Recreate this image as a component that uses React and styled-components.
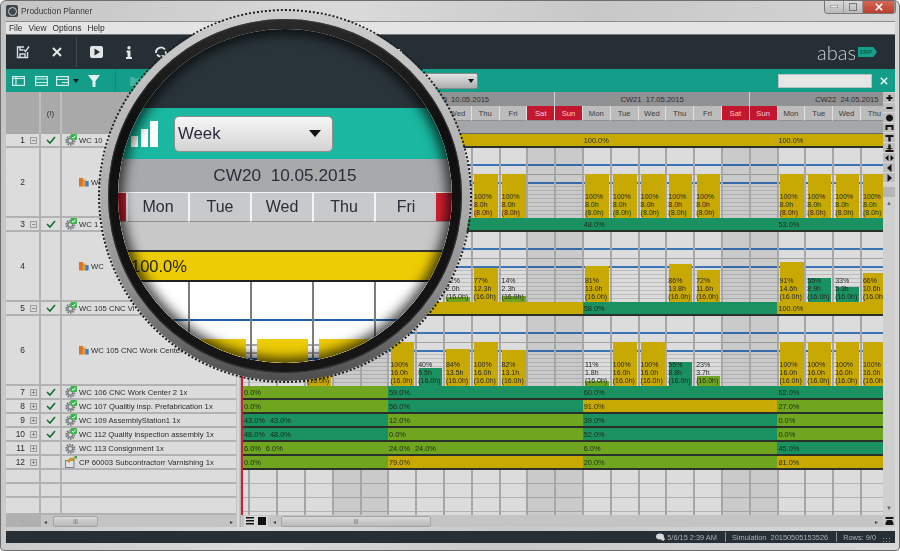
import React from 'react';
import styled, { createGlobalStyle } from 'styled-components';

const GlobalStyle = createGlobalStyle`
  html, body { margin: 0; padding: 0; background: #fff; }
  * { box-sizing: border-box; }
`;

const YELLOW = '#c8a904';
const TEAL = '#199160';
const LIME = '#6fa51f';
const DAYS = ['Tue', 'Wed', 'Thu', 'Fri', 'Sat', 'Sun', 'Mon'];
const DAY_TEMPLATE = '5.4px repeat(24, 27.8px)';

const Window = styled.div`
  width: 900px;
  height: 551px;
  display: flex;
  flex-direction: column;
  padding: 0 4px 7px 5px;
  overflow: hidden;
  position: relative;
  border: 1px solid #6d6d6d;
  border-radius: 6px 6px 4px 4px;
  background: linear-gradient(100deg, #c4c4c4, #dadada 35%, #c8c8c8 60%, #d8d8d8);
  font-family: 'Liberation Sans', Arial, sans-serif;
  color: #333;
  filter: blur(0.35px);
`;
const TitleBar = styled.div`
  height: 20px;
  flex: none;
  display: flex;
  align-items: center;
  gap: 3px;
  font-size: 8.4px;
  color: #3a3a3a;
`;
const TitleLogo = styled.span`
  width: 12px;
  height: 12px;
  background: #3d474c;
  border-radius: 2px;
  display: flex;
  align-items: center;
  justify-content: center;
  &::after {
    content: '';
    width: 7px;
    height: 7px;
    border-radius: 50%;
    border: 1px solid #c8cfd2;
  }
`;
const WindowControls = styled.div`
  position: absolute;
  top: -1px;
  right: 3px;
  width: 72px;
  height: 14px;
  display: flex;
  border: 1px solid #777;
  border-top: 0;
  border-radius: 0 0 4px 4px;
  overflow: hidden;
`;
const ControlButton = styled.span`
  flex: ${p => p.$grow || 1};
  display: flex;
  align-items: center;
  justify-content: center;
  color: #fff;
  background: ${p => p.$close
    ? 'linear-gradient(#d9695a, #b9402f)'
    : 'linear-gradient(#dcdcdc, #b9b9b9)'};
  border-right: 1px solid #999;
`;
const MenuBar = styled.div`
  height: 14px;
  flex: none;
  display: flex;
  align-items: center;
  gap: 6px;
  padding-left: 3px;
  font-size: 8.4px;
  background: #e4e4e4;
  border-top: 1px solid #8d8d8d;
  border-bottom: 1px solid #777;
  color: #2d2d2d;
`;
const DarkBar = styled.div`
  height: 34px;
  flex: none;
  display: flex;
  align-items: center;
  background: #262f35;
  padding-right: 18px;
`;
const ToolButton = styled.span`
  width: ${p => p.$w}px;
  margin-left: ${p => p.$ml || 0}px;
  flex: none;
  display: flex;
  align-items: center;
  justify-content: center;
`;
const DarkDivider = styled.span`
  width: 1px;
  height: 30px;
  margin: 0 2px;
  flex: none;
  background: #3f4a50;
`;
const LogoWrap = styled.div`
  margin-left: auto;
  display: flex;
  align-items: center;
  gap: 2px;
`;
const LogoText = styled.span`
  font-family: Lato, 'Liberation Sans', sans-serif;
  font-weight: 300;
  font-size: 20px;
  line-height: 20px;
  color: #c9cfd1;
`;
const LogoTag = styled.span`
  width: 19px;
  height: 10px;
  padding-left: 2px;
  display: flex;
  align-items: center;
  font-size: 6px;
  font-weight: bold;
  color: #0b5f52;
  background: #14a08a;
  clip-path: polygon(0 0, 80% 0, 100% 50%, 80% 100%, 0 100%);
`;
const TealBar = styled.div`
  height: 23px;
  flex: none;
  display: flex;
  align-items: center;
  background: #149e8a;
`;
const TealDivider = styled.span`
  width: 1px;
  height: 23px;
  margin: 0 9px;
  flex: none;
  background: #0f8a78;
`;
const SelectBox = styled.div`
  width: 200px;
  height: 16px;
  margin-left: 133px;
  padding-right: 3px;
  display: flex;
  align-items: center;
  justify-content: flex-end;
  border: 1px solid #8a8a8a;
  border-radius: 2px;
  background: linear-gradient(#e2e2e2, #adadad);
`;
const SearchBox = styled.div`
  width: 94px;
  height: 14px;
  margin-left: auto;
  background: #e6e6e6;
  border: 1px solid #b6c4c1;
`;
const CloseWrap = styled.span`
  width: 23px;
  display: flex;
  justify-content: center;
  color: #e6f5f2;
`;
const Main = styled.div`
  flex: 1;
  min-height: 0;
  display: flex;
  background: #c9c9c9;
`;
const LeftPane = styled.div`
  width: 230px;
  flex: none;
  display: flex;
  flex-direction: column;
  background: #dcdcdc;
`;
const RowGrid = styled.div`
  display: grid;
  grid-template-columns: 35px 21px 1fr;
  height: ${p => p.$h}px;
  flex: ${p => (p.$fill ? 1 : 'none')};
  background: ${p => p.$bg || '#dcdcdc'};
  border-bottom: ${p => (p.$header ? '0' : '2px solid #b2b2b2')};
`;
const CellBase = styled.div`
  display: flex;
  align-items: center;
  font-size: 7.7px;
  color: #2b2b2b;
  white-space: nowrap;
  overflow: hidden;
  border-right: 2px solid ${p => (p.$header ? '#bdbdbd' : '#b2b2b2')};
`;
const NumberCell = styled(CellBase)`
  justify-content: flex-end;
  gap: 3px;
  padding-right: 2px;
  font-size: 8.4px;
`;
const FlagCell = styled(CellBase)`
  justify-content: center;
`;
const NameCell = styled(CellBase)`
  padding-left: ${p => (p.$child ? 17 : 3)}px;
  gap: 2px;
  border-right: 0;
`;
const Expander = styled.span`
  width: 7px;
  height: 7px;
  margin-left: 2px;
  display: inline-flex;
  align-items: center;
  justify-content: center;
  font-size: 7px;
  line-height: 1;
  color: #456;
  background: #d6d8da;
  border: 1px solid #9c9c9c;
  visibility: ${p => (p.$hidden ? 'hidden' : 'visible')};
`;
const Splitter = styled.div`
  width: 5px;
  flex: none;
  background: linear-gradient(90deg, #b8b8b8, #e4e4e4 40%, #a8a8a8);
`;
const ChartPane = styled.div`
  width: 642px;
  flex: none;
  display: flex;
  flex-direction: column;
  overflow: hidden;
`;
const WeekRow = styled.div`
  height: 14px;
  flex: none;
  display: grid;
  grid-template-columns: 118.6px repeat(3, 194.7px);
  background: #909192;
`;
const WeekCell = styled.div`
  display: flex;
  align-items: center;
  justify-content: center;
  white-space: pre;
  font-size: 7.6px;
  color: #2e2e2e;
  border-left: ${p => (p.$first ? 0 : '1px solid #d2d2d2')};
`;
const DayRow = styled.div`
  height: 15px;
  flex: none;
  display: grid;
  grid-template-columns: 7.4px repeat(24, 27.8px);
  background: #b4b4b4;
`;
const DayCell = styled.div`
  display: flex;
  align-items: center;
  justify-content: center;
  font-size: 7.7px;
  color: ${p => (p.$off ? '#f3ccd1' : '#3a3a3a')};
  background: ${p => (p.$off ? '#c2172e' : '#bcbcbc')};
  border-left: 1px solid #e0e0e0;
  border-bottom: 1px solid #8f8f8f;
`;
const HeaderGap = styled.div`
  height: 13px;
  flex: none;
  background: #a5a6a7;
  border-bottom: 1px solid #666;
`;
const ChartBody = styled.div`
  flex: 1;
  min-height: 0;
  display: flex;
  flex-direction: column;
  border-left: 2px solid #d4202c;
`;
const SegmentRow = styled.div`
  height: 14px;
  flex: none;
  display: grid;
  grid-template-columns: 145px 194.7px 194.7px 1fr;
  border-bottom: 2px solid #2a3128;
`;
const Segment = styled.div`
  display: flex;
  align-items: center;
  gap: 5px;
  padding-left: 1px;
  font-size: 7.4px;
  white-space: nowrap;
  overflow: hidden;
  color: #1d2a16;
  background: ${p => p.$c};
`;
const TallRow = styled.div`
  height: 70px;
  flex: none;
  display: grid;
  grid-template-columns: ${DAY_TEMPLATE};
  background-color: #dcdcdc;
  background-repeat: no-repeat;
  background-image:
    linear-gradient(#3a74b6, #3a74b6),
    linear-gradient(#3a74b6, #3a74b6),
    linear-gradient(#a2a2a2, #a2a2a2),
    repeating-linear-gradient(#bcbcbc 0 1px, transparent 1px 4px);
  background-size: 100% 2px, 100% 2px, 100% 1px, 100% 32px;
  background-position: 0 16px, 0 34px, 0 26px, 0 38px;
`;
const DayColumn = styled.div`
  display: grid;
  min-width: 0;
  border-left: ${p => (p.$lead ? 0 : '2px solid #a6a6a6')};
  background: ${p => (p.$off ? 'rgba(0, 0, 0, 0.08)' : 'transparent')};
`;
const LoadBar = styled.div`
  grid-area: 1 / 1;
  align-self: end;
  width: 23.5px;
  margin-left: 1.5px;
  background: ${p => p.$c};
`;
const LoadText = styled.div`
  grid-area: 1 / 1;
  align-self: end;
  margin-left: 1px;
  font-size: 7px;
  line-height: 8px;
  white-space: pre;
  color: #262626;
  padding-bottom: 1px;
`;
const EmptyGrid = styled.div`
  flex: 1;
  display: grid;
  grid-template-columns: ${DAY_TEMPLATE};
  background-color: #dcdcdc;
  background-image: repeating-linear-gradient(transparent 0 12.5px, #b2b2b2 12.5px 14px);
`;
const SidePane = styled.div`
  width: 12px;
  flex: none;
  display: flex;
  flex-direction: column;
  padding-top: 1px;
  background: #cfcfcf;
`;
const SideButton = styled.span`
  height: 10px;
  flex: none;
  display: flex;
  align-items: center;
  justify-content: center;
  background: #bdbdbd;
  border-bottom: 1px solid #d6d6d6;
`;
const SideThumb = styled.span`
  height: 10px;
  margin-top: 4px;
  flex: none;
  background: #b5b5b5;
`;
const SideTrack = styled.div`
  flex: 1;
  display: flex;
  flex-direction: column;
  justify-content: space-between;
  align-items: center;
  padding: 3px 0 4px;
  font-size: 6px;
  line-height: 6px;
  color: #666;
`;
const ScrollRow = styled.div`
  height: 12px;
  flex: none;
  display: flex;
  background: #c4c4c4;
`;
const GripCorner = styled.div`
  width: 35px;
  flex: none;
  display: flex;
  align-items: center;
  justify-content: center;
  font-size: 6px;
  letter-spacing: 1px;
  color: #8d8d8d;
  background: #b0b0b0;
`;
const LeftTrack = styled.div`
  width: 195px;
  flex: none;
  display: flex;
  align-items: center;
  padding: 0 3px;
  font-size: 6px;
  color: #444;
`;
const ChartTrack = styled.div`
  width: 642px;
  flex: none;
  display: flex;
  align-items: center;
  padding: 0 5px 0 3px;
  font-size: 6px;
  color: #444;
`;
const Thumb = styled.span`
  width: ${p => p.$w}px;
  height: 11px;
  margin-left: ${p => p.$ml}px;
  flex: none;
  display: flex;
  align-items: center;
  justify-content: center;
  font-size: 6px;
  color: #666;
  border: 1px solid #a3a3a3;
  border-radius: 2px;
  background: linear-gradient(#d8d8d8, #bababa);
`;
const PushRight = styled.span`
  margin-left: auto;
`;
const ArrowGap = styled.span`
  margin-left: 5px;
`;
const ViewButton = styled.span`
  width: 12px;
  height: 11px;
  flex: none;
  display: flex;
  align-items: center;
  justify-content: center;
  background: #d6d6d6;
`;
const CornerButton = styled.span`
  width: 12px;
  flex: none;
  display: flex;
  align-items: center;
  justify-content: center;
  background: #c8c8c8;
`;
const StatusBar = styled.div`
  height: 12px;
  margin-top: 4px;
  flex: none;
  display: flex;
  align-items: center;
  justify-content: flex-end;
  padding-right: 5px;
  font-size: 7.4px;
  white-space: pre;
  color: #aab2b5;
  background: #262f35;
`;
const StatusItem = styled.span`
  display: flex;
  align-items: center;
  gap: 2px;
  height: 10px;
  padding: 0 ${p => (p.$last ? 0 : 8)}px 0 6px;
  border-right: ${p => (p.$last ? 0 : '1px solid #87908f')};
`;
const ResizeGrip = styled.span`
  width: 8px;
  height: 6px;
  margin-left: 6px;
  align-self: flex-end;
  background-image: radial-gradient(#8b9395 0.8px, transparent 1px);
  background-size: 3px 3px;
`;

/* the magnifying glass lying over the window */
const Lens = styled.div`
  position: absolute;
  left: 97px;
  top: 8px;
  width: 374px;
  height: 374px;
  border-radius: 50%;
  border: 2px dotted #1c1c1c;
  display: flex;
`;
const MetalRing = styled.div`
  flex: 1;
  border-radius: 50%;
  padding: 8px;
  display: flex;
  background: linear-gradient(#cdcdcd, #a9a9a9 55%, #8c8c8c 75%, #4d4d4d);
`;
const BlackRing = styled.div`
  flex: 1;
  border-radius: 50%;
  padding: 10px;
  display: flex;
  background: linear-gradient(#2a2a2a, #0f0f0f 30%, #161616);
  box-shadow: inset 0 0 1px 1px rgba(60, 60, 60, 0.9);
`;
const Glass = styled.div`
  flex: 1;
  border-radius: 50%;
  overflow: hidden;
  position: relative;
  display: flex;
  flex-direction: column;
  background: #fff;
  &::after {
    content: '';
    position: absolute;
    inset: 0;
    border-radius: 50%;
    box-shadow: inset 0 0 12px 5px rgba(0, 0, 0, 0.72);
  }
`;
const LensDark = styled.div`
  height: 79px;
  flex: none;
  background: #29343a;
`;
const LensTeal = styled.div`
  height: 51px;
  flex: none;
  display: flex;
  align-items: center;
  padding-left: 13px;
  gap: 16px;
  background: #1ab8a0;
`;
const LensSelect = styled.div`
  width: 159px;
  height: 36px;
  padding: 0 11px 0 3px;
  display: flex;
  align-items: center;
  justify-content: space-between;
  font-size: 16.8px;
  color: #2a2a3c;
  border: 1px solid #8f8f8f;
  border-radius: 5px;
  background: linear-gradient(#f6f6f6, #d3d3d3);
`;
const LensCaret = styled.span`
  width: 0;
  height: 0;
  border-left: 6px solid transparent;
  border-right: 6px solid transparent;
  border-top: 7px solid #111;
`;
const LensWeek = styled.div`
  height: 33px;
  flex: none;
  display: flex;
  align-items: center;
  justify-content: center;
  white-space: pre;
  font-size: 17.2px;
  color: #2c2c3a;
  background: #a7a9ab;
`;
const LensDays = styled.div`
  height: 30px;
  flex: none;
  display: grid;
  grid-template-columns: 8px repeat(5, 62px) 1fr;
  background: #a7a9ab;
`;
const LensDay = styled.div`
  display: flex;
  align-items: center;
  justify-content: center;
  font-size: 16px;
  color: #2c2c3a;
  background: ${p => (p.$off ? '#d2202f' : '#c8c9cb')};
  border-left: ${p => (p.$off ? 0 : '2px solid #f4f4f4')};
  border-top: 1px solid #f4f4f4;
  border-bottom: 1px solid #8e8e8e;
`;
const LensGap = styled.div`
  height: 30px;
  flex: none;
  background: #c8c8c8;
  border-bottom: 2px solid #333;
`;
const LensLoad = styled.div`
  height: 30px;
  flex: none;
  padding-left: 13px;
  display: flex;
  align-items: center;
  font-size: 16.5px;
  color: #222;
  background: #edcb05;
  border-bottom: 2px solid #222;
`;
const LensChart = styled.div`
  flex: 1;
  display: grid;
  grid-template-columns: 8px repeat(5, 62px) 1fr;
  background-color: #fff;
  background-repeat: no-repeat;
  background-image:
    linear-gradient(#1f5fa8, #1f5fa8),
    linear-gradient(#1f5fa8, #1f5fa8),
    linear-gradient(#a9a9a9, #a9a9a9),
    linear-gradient(#a9a9a9, #a9a9a9);
  background-size: 100% 2px;
  background-position: 0 37px, 0 76px, 0 62px, 0 70px;
`;
const LensColumn = styled.div`
  padding: 57px 4px 0 5px;
  border-left: 2px solid #7d7d7d;
`;
const LensBar = styled.div`
  height: 100%;
  background: #edcb05;
`;

const SaveIcon = () => (
  <svg width="14" height="14" viewBox="0 0 14 14" fill="none" stroke="#d9dee0" strokeWidth="1.4">
    <path d="M8 2H1.5v10.5h10V7" />
    <path d="M4 12.5V9h5v3.5" />
    <path d="M4 2v3h3" />
    <path d="M7.5 4.5l2 2L13 1.5" />
  </svg>
);
const CrossIcon = ({ size = 10, color = '#e3e7e8', width = 2 }) => (
  <svg width={size} height={size} viewBox="0 0 10 10" stroke={color} strokeWidth={width}>
    <path d="M1 1l8 8M9 1l-8 8" />
  </svg>
);
const PlayIcon = () => (
  <svg width="13" height="12" viewBox="0 0 13 12">
    <rect width="13" height="12" rx="2" fill="#e1e5e6" />
    <path d="M4.5 2.5L10 6l-5.5 3.5z" fill="#262f35" />
  </svg>
);
const InfoIcon = () => (
  <svg width="6" height="13" viewBox="0 0 6 13" fill="#e1e5e6">
    <circle cx="3" cy="1.7" r="1.7" />
    <path d="M.5 4.5H4.5v6.5H6V13H0v-2h1.5V6.5h-1z" />
  </svg>
);
const SyncIcon = () => (
  <svg width="12" height="12" viewBox="0 0 12 12" fill="none" stroke="#e1e5e6" strokeWidth="1.8">
    <path d="M1 7a5 5 0 0 1 9-3.5M11 5a5 5 0 0 1-9 3.5" />
  </svg>
);
const DotIcon = () => (
  <svg width="8" height="8" viewBox="0 0 8 8"><circle cx="4" cy="4" r="3" fill="#dfe3e4" /></svg>
);
const PanelIcon = ({ variant }) => (
  <svg width="13" height="10" viewBox="0 0 13 10" fill="none" stroke="#cfeee9" strokeWidth="1.2">
    <rect x=".6" y=".6" width="11.8" height="8.8" />
    {variant === 0 && <path d="M4 1v8M1 2.5h11" />}
    {variant === 1 && <path d="M1 3h11M1 6.5h11" />}
    {variant === 2 && <path d="M1 3.5h11M6 6.5h6" />}
  </svg>
);
const CaretIcon = ({ color = '#10201d' }) => (
  <svg width="6" height="4" viewBox="0 0 6 4"><path d="M0 0h6L3 4z" fill={color} /></svg>
);
const FilterIcon = () => (
  <svg width="12" height="12" viewBox="0 0 12 12"><path d="M0 0h12L7.5 6v6h-3V6z" fill="#dff3f0" /></svg>
);
const FolderIcon = () => (
  <svg width="11" height="10" viewBox="0 0 11 10"><path d="M0 1h4l1 1.5h6V10H0z" fill="#3cb4a2" /></svg>
);
const SignalIcon = () => (
  <svg width="27" height="26" viewBox="0 0 27 26" fill="#fff">
    <rect x="0" y="15" width="7" height="11" />
    <rect x="10" y="8" width="7" height="18" />
    <rect x="19" y="0" width="8" height="26" />
  </svg>
);
const CheckMark = () => (
  <svg width="10" height="8" viewBox="0 0 10 8" fill="none" stroke="#0f6e2c" strokeWidth="1.6">
    <path d="M1 4l3 3 5-6" />
  </svg>
);
const GearIcon = ({ ok }) => (
  <svg width="12" height="12" viewBox="0 0 12 12" style={{ flex: 'none' }}>
    <circle cx="5.3" cy="6.7" r="4.2" fill="none" stroke="#6f7478" strokeWidth="1.7" strokeDasharray="1.6 1" />
    <circle cx="5.3" cy="6.7" r="2.5" fill="none" stroke="#7d8286" strokeWidth="1.6" />
    {ok && (
      <>
        <rect x="5.5" y="0" width="6.5" height="6" rx="1" fill="#39b54a" />
        <path d="M7 3l1.3 1.4L10.6 1.6" fill="none" stroke="#fff" strokeWidth="1" />
      </>
    )}
  </svg>
);
const ColumnsIcon = () => (
  <svg width="10" height="10" viewBox="0 0 10 10" style={{ flex: 'none' }}>
    <rect x="0" y="1" width="4" height="8.5" fill="#d9742a" />
    <rect x="3.6" y="2.5" width="3" height="7" fill="#e39a35" />
    <rect x="6.4" y="4" width="3.2" height="5.5" fill="#3d7cc2" />
  </svg>
);
const PackageIcon = () => (
  <svg width="12" height="12" viewBox="0 0 12 12" style={{ flex: 'none' }}>
    <rect x=".5" y="4.5" width="8.5" height="7" fill="#dfe3e6" stroke="#667" strokeWidth=".8" />
    <path d="M2 5.5C3 2 6 1.5 9.5 1.5v3C7 4.5 5 5 4.5 7z" fill="#c9972f" />
    <rect x="9.5" y="0" width="2.5" height="2.5" fill="#3aa548" />
  </svg>
);
const EyeIcon = () => (
  <svg width="9" height="8" viewBox="0 0 9 8" fill="#d6dadb">
    <ellipse cx="4" cy="3.5" rx="4" ry="3" />
    <circle cx="7" cy="6" r="1.8" />
  </svg>
);
const SideGlyph = ({ d }) => (
  <svg width="9" height="8" viewBox="0 0 9 8"><path d={d} fill="#161616" /></svg>
);
const SIDE_GLYPHS = [
  'M3.5 1h2v2h2v2h-2v2h-2V5h-2V3h2z',
  'M1.5 3h6v2h-6z',
  'M4.5.5a3.5 3.5 0 1 0 .01 0z',
  'M.5 1h8v5h-2V3h-4v3h-2z',
  'M.5 1h8v2H5.7v4.5H3.3V3H.5z',
  'M.5 6h8V8h-8zM3.3 .5h2.4V4H8L4.5 6 1 4h2.3z',
  'M0 4l3.5-3v6zM9 4L5.5 1v6z',
  'M2 4l4.5-4v8z',
  'M7 4L2.5 0v8z',
];

const rows = [
  { n: 1, open: true, ok: true, name: 'WC 10', icon: 'gear', segs: [[YELLOW, []], [YELLOW, []], [YELLOW, ['100.0%']], [YELLOW, ['100.0%']]] },
  { n: 2, child: true, name: 'WC', cap: '8.0h', bars: {
    9: [100], 10: [100], 13: [100], 14: [100], 15: [100], 16: [100], 17: [100], 20: [100], 21: [100], 22: [100], 23: [100],
  } },
  { n: 3, open: true, ok: true, name: 'WC 1', icon: 'gear', segs: [[TEAL, []], [TEAL, []], [TEAL, ['48.0%']], [TEAL, ['53.0%']]] },
  { n: 4, child: true, name: 'WC', cap: '16.0h', bars: {
    8: [12, '2.0h', LIME], 9: [77, '12.3h'], 10: [14, '2.3h', LIME], 13: [81, '13.0h'], 16: [86, '13.8h'], 17: [72, '11.6h'], 20: [91, '14.6h'], 21: [55, '8.9h', TEAL], 22: [33, '5.3h', TEAL], 23: [66, '10.6h'],
  } },
  { n: 5, open: true, ok: true, name: 'WC 105 CNC Vi', icon: 'gear', segs: [[YELLOW, []], [YELLOW, []], [TEAL, ['58.0%']], [YELLOW, ['100.0%']]] },
  { n: 6, child: true, name: 'WC 105 CNC Work Center', cap: '16.0h', bars: {
    3: [100, '16.0h'], 6: [100, '16.0h'], 7: [40, '6.5h', TEAL], 8: [84, '13.5h'], 9: [100, '16.0h'], 10: [82, '13.1h'], 13: [11, '1.8h', LIME], 14: [100, '16.0h'], 15: [100, '16.0h'], 16: [55, '8.8h', TEAL], 17: [23, '3.7h', LIME], 20: [100, '16.0h'], 21: [100, '16.0h'], 22: [100, '16.0h'], 23: [100, '16.0h'],
  } },
  { n: 7, ok: true, name: 'WC 106 CNC Work Center 2  1x', icon: 'gear', segs: [[LIME, ['0.0%']], [TEAL, ['59.0%']], [TEAL, ['60.0%']], [TEAL, ['62.0%']]] },
  { n: 8, ok: true, name: 'WC 107 Qualitiy insp. Prefabrication  1x', icon: 'gear', segs: [[LIME, ['0.0%']], [TEAL, ['56.0%']], [YELLOW, ['91.0%']], [LIME, ['27.0%']]] },
  { n: 9, ok: true, name: 'WC 109 AssemblyStation1  1x', icon: 'gear', segs: [[TEAL, ['43.0%', '43.0%']], [LIME, ['12.0%']], [TEAL, ['39.0%']], [LIME, ['0.0%']]] },
  { n: 10, ok: true, name: 'WC 112 Quality inspection assembly  1x', icon: 'gear', segs: [[TEAL, ['48.0%', '48.0%']], [LIME, ['0.0%']], [TEAL, ['52.0%']], [LIME, ['0.0%']]] },
  { n: 11, name: 'WC 113 Consignment  1x', icon: 'plainGear', segs: [[LIME, ['6.0%', '6.0%']], [LIME, ['24.0%', '24.0%']], [LIME, ['6.0%']], [TEAL, ['45.0%']]] },
  { n: 12, name: 'CP 60003 Subcontractorr Varnishing  1x', icon: 'package', segs: [[LIME, ['0.0%']], [YELLOW, ['79.0%']], [LIME, ['20.0%']], [YELLOW, ['81.0%']]] },
];

const dayIndexes = Array.from({ length: 24 }, (_, i) => i);
const isOff = i => i % 7 === 4 || i % 7 === 5;
// the days up to Tue of CW20 lie under the lens and show no label
const dayLabel = i => (i < 8 ? '' : DAYS[i % 7]);

const RowIcon = ({ row }) => {
  if (row.child) return <ColumnsIcon />;
  if (row.icon === 'package') return <PackageIcon />;
  return <GearIcon ok={row.icon === 'gear'} />;
};

const LeftRow = ({ row }) => (
  <RowGrid $h={row.child ? 70 : 14}>
    <NumberCell>
      {row.n}
      <Expander $hidden={row.child}>{row.open ? '−' : '+'}</Expander>
    </NumberCell>
    <FlagCell>{row.ok && <CheckMark />}</FlagCell>
    <NameCell $child={row.child}>
      <RowIcon row={row} />
      {row.name}
    </NameCell>
  </RowGrid>
);

const ChartRow = ({ row }) => {
  if (row.segs) {
    return (
      <SegmentRow>
        {row.segs.map(([color, labels], i) => (
          <Segment key={i} $c={color}>
            {labels.map((label, j) => <span key={j}>{label}</span>)}
          </Segment>
        ))}
      </SegmentRow>
    );
  }
  return (
    <TallRow>
      {dayIndexes.map(i => {
        const bar = row.bars[i];
        return (
          <DayColumn key={i} $lead={i === 0} $off={isOff(i)}>
            {bar && (
              <>
                <LoadBar $c={bar[2] || YELLOW} style={{ height: bar[0] * 0.44 }} />
                <LoadText>{`${bar[0]}%\n${bar[1] || row.cap}\n(${row.cap})`}</LoadText>
              </>
            )}
          </DayColumn>
        );
      })}
    </TallRow>
  );
};

export default function App() {
  return (
    <>
      <GlobalStyle />
      <Window>
        <TitleBar>
          <TitleLogo />
          Production Planner
        </TitleBar>
        <WindowControls>
          <ControlButton>
            <svg width="8" height="3"><rect width="8" height="3" fill="#eee" stroke="#777" /></svg>
          </ControlButton>
          <ControlButton>
            <svg width="8" height="8"><rect x=".5" y=".5" width="7" height="7" fill="none" stroke="#777" /></svg>
          </ControlButton>
          <ControlButton $close $grow={1.7}><CrossIcon size={8} color="#fff" /></ControlButton>
        </WindowControls>
        <MenuBar>
          <span>File</span><span>View</span><span>Options</span><span>Help</span>
        </MenuBar>
        <DarkBar>
          <ToolButton $w={34}><SaveIcon /></ToolButton>
          <ToolButton $w={34}><CrossIcon /></ToolButton>
          <DarkDivider />
          <ToolButton $w={34}><PlayIcon /></ToolButton>
          <ToolButton $w={32}><InfoIcon /></ToolButton>
          <ToolButton $w={32}><SyncIcon /></ToolButton>
          <ToolButton $w={10} $ml={217}><DotIcon /></ToolButton>
          <LogoWrap>
            <LogoText>abas</LogoText>
            <LogoTag>ERP</LogoTag>
          </LogoWrap>
        </DarkBar>
        <TealBar>
          <ToolButton $w={24}><PanelIcon variant={0} /></ToolButton>
          <ToolButton $w={22}><PanelIcon variant={1} /></ToolButton>
          <ToolButton $w={21}><PanelIcon variant={2} /></ToolButton>
          <CaretIcon />
          <ToolButton $w={24} $ml={3}><FilterIcon /></ToolButton>
          <TealDivider />
          <ToolButton $w={20}><FolderIcon /></ToolButton>
          <SelectBox><CaretIcon color="#111" /></SelectBox>
          <SearchBox />
          <CloseWrap><CrossIcon size={8} color="#e6f5f2" /></CloseWrap>
        </TealBar>
        <Main>
          <LeftPane>
            <RowGrid $h={42} $bg="#a9a9a9" $header>
              <FlagCell $header />
              <FlagCell $header>(!)</FlagCell>
              <NameCell />
            </RowGrid>
            {rows.map(row => <LeftRow key={row.n} row={row} />)}
            <RowGrid $h={14}><NumberCell /><FlagCell /><NameCell /></RowGrid>
            <RowGrid $h={14}><NumberCell /><FlagCell /><NameCell /></RowGrid>
            <RowGrid $h={18} $fill><NumberCell /><FlagCell /><NameCell /></RowGrid>
          </LeftPane>
          <Splitter />
          <ChartPane>
            <WeekRow>
              <WeekCell $first />
              <WeekCell>{'CW20  10.05.2015'}</WeekCell>
              <WeekCell>{'CW21  17.05.2015'}</WeekCell>
              <WeekCell>{'CW22  24.05.2015'}</WeekCell>
            </WeekRow>
            <DayRow>
              {dayIndexes.map(i => (
                <DayCell key={i} $off={isOff(i)}>{dayLabel(i)}</DayCell>
              ))}
            </DayRow>
            <HeaderGap />
            <ChartBody>
              {rows.map(row => <ChartRow key={row.n} row={row} />)}
              <EmptyGrid>
                {dayIndexes.map(i => <DayColumn key={i} $lead={i === 0} $off={isOff(i)} />)}
              </EmptyGrid>
            </ChartBody>
          </ChartPane>
          <SidePane>
            {SIDE_GLYPHS.map((d, i) => <SideButton key={i}><SideGlyph d={d} /></SideButton>)}
            <SideThumb />
            <SideTrack><span>▲</span><span>▼</span></SideTrack>
          </SidePane>
        </Main>
        <ScrollRow>
          <GripCorner>:::</GripCorner>
          <LeftTrack>
            ◂
            <Thumb $w={45} $ml={6}>|||</Thumb>
            <PushRight>▸</PushRight>
          </LeftTrack>
          <Splitter />
          <ChartTrack>
            <ViewButton>
              <svg width="8" height="8" viewBox="0 0 8 8"><path d="M0 0h8v1.5H0zM0 3h8v1.5H0zM0 6h8v1.5H0z" fill="#111" /></svg>
            </ViewButton>
            <ViewButton>
              <svg width="8" height="8"><rect width="8" height="8" fill="#111" /></svg>
            </ViewButton>
            <ArrowGap>◂</ArrowGap>
            <Thumb $w={150} $ml={5}>|||</Thumb>
            <PushRight>▸</PushRight>
          </ChartTrack>
          <CornerButton>
            <svg width="9" height="8" viewBox="0 0 9 8"><path d="M.5 0h8v2h-8zM2 3h5l1.5 3v2h-8V6z" fill="#161616" /></svg>
          </CornerButton>
        </ScrollRow>
        <StatusBar>
          <StatusItem><EyeIcon />{'5/6/15 2:39 AM'}</StatusItem>
          <StatusItem>{'Simulation  20150505153526'}</StatusItem>
          <StatusItem $last>{'Rows: 9/0'}</StatusItem>
          <ResizeGrip />
        </StatusBar>
        <Lens>
          <MetalRing>
            <BlackRing>
              <Glass>
                <LensDark />
                <LensTeal>
                  <SignalIcon />
                  <LensSelect>Week<LensCaret /></LensSelect>
                </LensTeal>
                <LensWeek>{'CW20  10.05.2015'}</LensWeek>
                <LensDays>
                  <LensDay $off />
                  <LensDay>Mon</LensDay>
                  <LensDay>Tue</LensDay>
                  <LensDay>Wed</LensDay>
                  <LensDay>Thu</LensDay>
                  <LensDay>Fri</LensDay>
                  <LensDay $off />
                </LensDays>
                <LensGap />
                <LensLoad>100.0%</LensLoad>
                <LensChart>
                  <span />
                  <LensColumn><LensBar /></LensColumn>
                  <LensColumn><LensBar /></LensColumn>
                  <LensColumn><LensBar /></LensColumn>
                  <LensColumn><LensBar /></LensColumn>
                  <LensColumn><LensBar /></LensColumn>
                  <LensColumn />
                </LensChart>
              </Glass>
            </BlackRing>
          </MetalRing>
        </Lens>
      </Window>
    </>
  );
}
